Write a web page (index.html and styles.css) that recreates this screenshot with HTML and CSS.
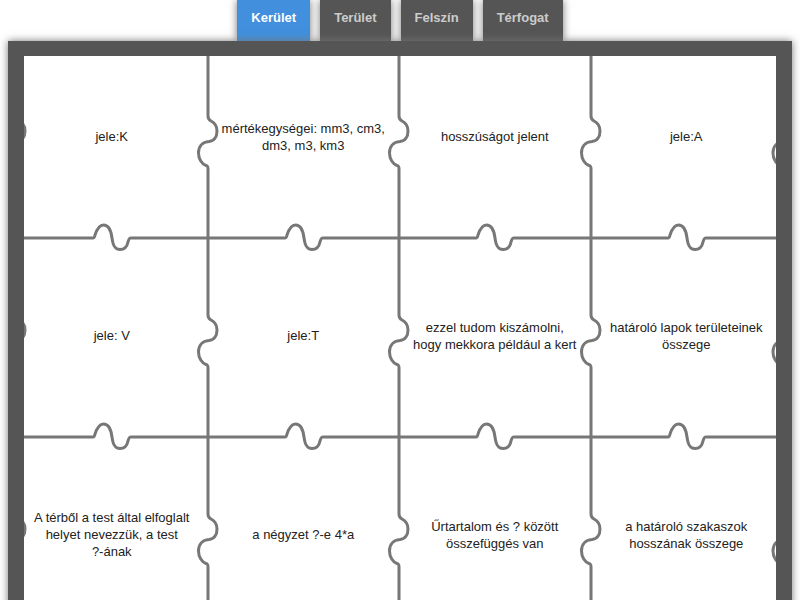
FILE: index.html
```html
<!DOCTYPE html>
<html lang="hu">
<head>
<meta charset="utf-8">
<meta name="viewport" content="width=device-width, initial-scale=1">
<title>Kerület, terület, felszín, térfogat</title>
<link rel="stylesheet" href="styles.css">
</head>
<body>
<svg class="defs" aria-hidden="true">
  <symbol id="side" overflow="visible"><path d="M0 0V77C0 80 1 81 3 82C7 84 9 88 9 92C9 98 6 102 1 102.500C-6 103 -9.500 108 -9.500 114C-9.500 120 -6 125 -2 126.500C0 127 0 128 0 130V199"/></symbol>
  <symbol id="base" overflow="visible"><path d="M0 199H77C78.500 199 78.500 198 79 196C81 190 83.500 186 87.500 186C93 186 95 191 96 199C97 207 99 210.500 104 210.500C109 210.500 111 208 112 203C113 200 113 199 115 199H192"/></symbol>
</svg>
<nav class="tabs">
  <a class="tab active" href="#kerulet">Kerület</a>
  <a class="tab" href="#terulet">Terület</a>
  <a class="tab" href="#felszin">Felszín</a>
  <a class="tab" href="#terfogat">Térfogat</a>
</nav>
<main class="board">
  <div class="puzzle">
    <div class="piece"><svg class="edge"><use href="#side"/><use href="#base"/></svg><p>jele:K</p></div>
    <div class="piece"><svg class="edge"><use href="#side"/><use href="#base"/></svg><p>mértékegységei: mm3, cm3, dm3, m3, km3</p></div>
    <div class="piece"><svg class="edge"><use href="#side"/><use href="#base"/></svg><p>hosszúságot jelent</p></div>
    <div class="piece"><svg class="edge"><use href="#side"/><use href="#base"/><use href="#side" x="100%"/></svg><p>jele:A</p></div>
    <div class="piece"><svg class="edge"><use href="#side"/><use href="#base"/></svg><p>jele: V</p></div>
    <div class="piece"><svg class="edge"><use href="#side"/><use href="#base"/></svg><p>jele:T</p></div>
    <div class="piece"><svg class="edge"><use href="#side"/><use href="#base"/></svg><p>ezzel tudom kiszámolni, hogy mekkora például a kert</p></div>
    <div class="piece"><svg class="edge"><use href="#side"/><use href="#base"/><use href="#side" x="100%"/></svg><p>határoló lapok területeinek összege</p></div>
    <div class="piece"><svg class="edge"><use href="#side"/><use href="#base"/></svg><p>A térből a test által elfoglalt helyet nevezzük, a test <span class="word">?-ának</span></p></div>
    <div class="piece"><svg class="edge"><use href="#side"/><use href="#base"/></svg><p>a négyzet ?-e 4*a</p></div>
    <div class="piece"><svg class="edge"><use href="#side"/><use href="#base"/></svg><p>Űrtartalom és ? között összefüggés van</p></div>
    <div class="piece"><svg class="edge"><use href="#side"/><use href="#base"/><use href="#side" x="100%"/></svg><p>a határoló szakaszok hosszának összege</p></div>
  </div>
</main>
</body>
</html>
```
FILE: styles.css
```css
* { box-sizing: border-box; }
html { scrollbar-width: none; }
body {
  margin: 0;
  background: #fff;
  color: #222;
  font-family: "Liberation Sans", Arial, sans-serif;
  font-size: 13px;
  line-height: 17px;
}
.defs { display: block; width: 0; height: 0; }
.tabs {
  display: flex;
  justify-content: center;
  gap: 10px;
}
.tab {
  padding: 9px 14px 15px;
  background: #555;
  color: #ccc;
  font-weight: bold;
  text-decoration: none;
  box-shadow: 0 0 8px #777;
}
.tab.active { background: #418fdd; color: #fff; }
.board {
  position: relative;
  margin: 0 8px;
  border: 16px solid #555;
  border-top-width: 15px;
  background: #fff;
  overflow: hidden;
  box-shadow: 0 0 8px #777;
}
.puzzle {
  display: grid;
  grid-template-columns: repeat(4, 1fr);
  grid-auto-rows: 199px;
  margin: -17px -6px 0 -8px;
}
.piece {
  position: relative;
  display: flex;
  align-items: center;
  justify-content: center;
  padding: 0 12px 4px;
  text-align: center;
}
.piece p { margin: 0; }
.word { white-space: nowrap; }
.edge {
  position: absolute;
  top: 0;
  left: 0;
  width: 100%;
  height: 100%;
  overflow: visible;
  fill: none;
  stroke: #777;
  stroke-width: 3;
}
```
